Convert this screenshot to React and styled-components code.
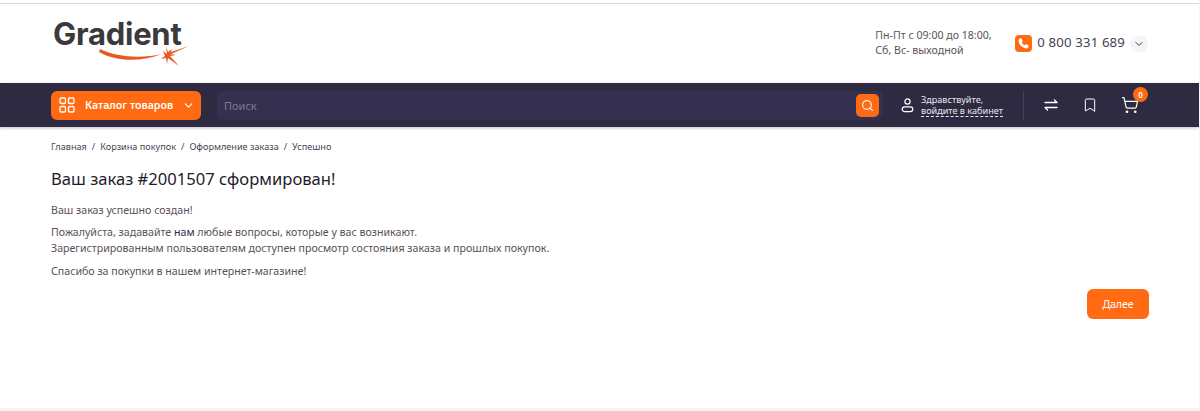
import styled, { createGlobalStyle } from 'styled-components';
import { ChevronDown, Search, Bookmark, ShoppingCart } from 'lucide-react';

const GlobalStyle = createGlobalStyle`
  html, body {
    margin: 0;
    padding: 0;
    background: #fff;
    font-family: 'Noto Sans', 'Open Sans', sans-serif;
    color: #4a4453;
  }
  * {
    box-sizing: border-box;
  }
`;

const Page = styled.div`
  display: flex;
  flex-direction: column;
  height: 411px;
  padding-top: 3px;
  overflow: hidden;
  border-right: 1px solid #f5f5f7;
`;

const TopHeader = styled.header`
  display: flex;
  align-items: center;
  justify-content: space-between;
  height: 80px;
  padding: 0 50px 0 51px;
  border-top: 1px solid #dcdcdc;
`;

const Logo = styled.a`
  display: block;
  position: relative;
  width: 140px;
  height: 58px;
`;

const LogoText = styled.span`
  display: block;
  padding: 1px 0 0 2px;
  font-family: 'Inter', sans-serif;
  font-size: 31px;
  font-weight: 700;
  line-height: 36px;
  letter-spacing: -0.25px;
  color: #3a3a3a;
`;

const LogoSwoosh = styled.svg`
  position: absolute;
  left: 0;
  top: 0;
`;

const Contacts = styled.div`
  display: flex;
  align-items: center;
`;

const Schedule = styled.div`
  width: 140px;
  margin-bottom: 2px;
  font-size: 10.6px;
  line-height: 15px;
  color: #5d5258;
`;

const PhoneIcon = styled.span`
  display: flex;
  align-items: center;
  justify-content: center;
  width: 17px;
  height: 17px;
  border-radius: 4px;
  background: #ff6a13;
`;

const PhoneNumber = styled.span`
  margin: 0 0 3px 5px;
  font-size: 13.2px;
  letter-spacing: 0.15px;
  color: #47424f;
`;

const PhoneToggle = styled.span`
  display: flex;
  align-items: center;
  justify-content: center;
  width: 18px;
  height: 18px;
  margin: 1px 1px 0 5px;
  border-radius: 50%;
  background: #f5f5f7;
  color: #3d3850;
`;

const NavBar = styled.nav`
  display: flex;
  align-items: center;
  height: 44px;
  padding: 0 51px;
  background: #2d2a42;
  box-shadow: 0 1px 3px rgba(0, 0, 0, 0.25);
`;

const CatalogButton = styled.button`
  display: flex;
  align-items: center;
  width: 150px;
  height: 29px;
  padding: 0 6px 0 8px;
  border: none;
  border-radius: 6px;
  background: #ff6a13;
  color: #fff;
  font-family: inherit;
  font-size: 10.6px;
  font-weight: 600;
  white-space: nowrap;
`;

const CatalogLabel = styled.span`
  margin-left: 10px;
  flex: 1;
  text-align: left;
`;

const SearchBox = styled.div`
  display: flex;
  align-items: center;
  justify-content: space-between;
  width: 666px;
  height: 29px;
  margin-left: 16px;
  padding: 0 4px 0 7px;
  border-radius: 6px;
  background: #35304f;
`;

const SearchPlaceholder = styled.span`
  font-size: 11px;
  color: #7f7b8d;
`;

const SearchButton = styled.span`
  display: flex;
  align-items: center;
  justify-content: center;
  width: 23px;
  height: 23px;
  border-radius: 5px;
  background: #ff6a13;
  color: #fff;
`;

const Account = styled.div`
  display: flex;
  align-items: center;
  width: 124px;
  height: 29px;
  margin-left: 17px;
  color: #fff;
  border-right: 1px solid #423e58;
`;

const AccountText = styled.div`
  margin-left: 6px;
  font-size: 9.1px;
  line-height: 11px;
  color: #e8e7ec;
`;

const AccountLink = styled.span`
  display: block;
  border-bottom: 1px dashed #e8e7ec;
  white-space: nowrap;
`;

const NavIcons = styled.div`
  display: flex;
  align-items: center;
  margin-left: 19px;
  gap: 23px;
  color: #fff;
`;

const CartWrap = styled.span`
  position: relative;
  display: flex;
`;

const CartBadge = styled.span`
  position: absolute;
  top: -9px;
  right: -9px;
  display: flex;
  align-items: center;
  justify-content: center;
  width: 15px;
  height: 15px;
  border-radius: 50%;
  background: #ff6a13;
  font-size: 8px;
  font-weight: 600;
  color: #fff;
`;

const Main = styled.main`
  flex: 1;
  display: flex;
  flex-direction: column;
  padding: 13px 50px 0 51px;
`;

const Breadcrumbs = styled.div`
  display: flex;
  gap: 5px;
  font-size: 9.12px;
  line-height: 14px;
  color: #4a4453;
`;

const Title = styled.h1`
  margin: 13px 0 0;
  font-size: 16.6px;
  font-weight: 400;
  line-height: 24px;
  color: #1f1b2b;
`;

const Paragraph = styled.p`
  margin: ${(props) => props.$gap || 7}px 0 0;
  font-size: 10.64px;
  line-height: 16px;
  color: #5a5058;
`;

const Strong = styled.span`
  color: #2d2a42;
`;

const Actions = styled.div`
  display: flex;
  justify-content: flex-end;
  margin-top: 10px;
`;

const NextButton = styled.button`
  width: 62px;
  height: 30px;
  border: none;
  border-radius: 6px;
  background: #ff6a13;
  color: #fff;
  font-family: inherit;
  font-size: 10.5px;
`;

const Footer = styled.div`
  height: 3px;
  background: #f5f5f7;
`;

const CatalogIcon = () => (
  <svg width="16" height="16" viewBox="0 0 16 16" fill="none" stroke="#fff" strokeWidth="1.3">
    <rect x="1" y="1" width="5.5" height="5.5" rx="1.3" />
    <rect x="9.5" y="1" width="5.5" height="5.5" rx="1.3" />
    <rect x="1" y="9.5" width="5.5" height="5.5" rx="1.3" />
    <rect x="9.5" y="9.5" width="5.5" height="5.5" rx="1.3" />
  </svg>
);

const HandsetIcon = () => (
  <svg width="13" height="13" viewBox="0 0 24 24" fill="#fff">
    <path d="M6.6 2.5c.7-.3 1.4 0 1.8.6l2 3.3c.3.6.2 1.3-.2 1.8L8.7 9.8c1.1 2.4 3.1 4.4 5.5 5.5l1.6-1.5c.5-.4 1.2-.5 1.8-.2l3.3 2c.6.4.9 1.1.6 1.8-.8 2.2-2.8 4-5.2 3.6C9.8 19.9 4.1 14.2 3 7.7 2.6 5.3 4.4 3.300 6.600 2.500z" />
  </svg>
);

const UserIcon = () => (
  <svg width="15" height="15" viewBox="0 0 15 15" fill="none" stroke="#fff" strokeWidth="1.2">
    <circle cx="7.5" cy="3.5" r="2.6" />
    <rect x="2.2" y="8.8" width="10.6" height="4.8" rx="2.4" />
  </svg>
);

const CompareIcon = () => (
  <svg width="16" height="16" viewBox="0 0 16 16" fill="none" stroke="#fff" strokeWidth="1.3" strokeLinecap="round" strokeLinejoin="round">
    <path d="M2 5.5h12M11.5 3L14 5.500" />
    <path d="M14 10.500H2M4.500 13L2 10.500" />
  </svg>
);

const App = () => {
  return (
    <>
      <GlobalStyle />
      <Page>
        <TopHeader>
          <Logo>
            <LogoText>Gradient</LogoText>
            <LogoSwoosh width="140" height="58" viewBox="0 0 140 58">
              <path d="M49 34c16 8 41 10 62 5-20 8-46 8-63-2z" fill="#e85a20" />
              <path d="M117 38l21-7-20 9z" fill="#e85a20" />
              <path d="M115 31l2 6 4-3-2 5 6 1-6 1 9 10-11-8-1 6-1-6-5 1 4-3-2-5 4 3z" fill="#e85a20" />
            </LogoSwoosh>
          </Logo>
          <Contacts>
            <Schedule>
              Пн-Пт с 09:00 до 18:00,
              <br />
              Сб, Вс- выходной
            </Schedule>
            <PhoneIcon>
              <HandsetIcon />
            </PhoneIcon>
            <PhoneNumber>0 800 331 689</PhoneNumber>
            <PhoneToggle>
              <ChevronDown size={12} />
            </PhoneToggle>
          </Contacts>
        </TopHeader>
        <NavBar>
          <CatalogButton>
            <CatalogIcon />
            <CatalogLabel>Каталог товаров</CatalogLabel>
            <ChevronDown size={13} />
          </CatalogButton>
          <SearchBox>
            <SearchPlaceholder>Поиск</SearchPlaceholder>
            <SearchButton>
              <Search size={13} />
            </SearchButton>
          </SearchBox>
          <Account>
            <UserIcon />
            <AccountText>
              Здравствуйте,
              <AccountLink>войдите в кабинет</AccountLink>
            </AccountText>
          </Account>
          <NavIcons>
            <CompareIcon />
            <Bookmark size={16} strokeWidth={1.5} />
            <CartWrap>
              <ShoppingCart size={18} strokeWidth={1.6} />
              <CartBadge>0</CartBadge>
            </CartWrap>
          </NavIcons>
        </NavBar>
        <Main>
          <Breadcrumbs>
            <span>Главная</span>
            <span>/</span>
            <span>Корзина покупок</span>
            <span>/</span>
            <span>Оформление заказа</span>
            <span>/</span>
            <span>Успешно</span>
          </Breadcrumbs>
          <Title>Ваш заказ #2001507 сформирован!</Title>
          <Paragraph $gap={11}>Ваш заказ успешно создан!</Paragraph>
          <Paragraph $gap={6}>
            Пожалуйста, задавайте <Strong>нам</Strong> любые вопросы, которые у вас возникают.
            <br />
            Зарегистрированным пользователям доступен просмотр состояния заказа и прошлых покупок.
          </Paragraph>
          <Paragraph>Спасибо за покупки в нашем интернет-магазине!</Paragraph>
          <Actions>
            <NextButton>Далее</NextButton>
          </Actions>
        </Main>
        <Footer />
      </Page>
    </>
  );
};

export default App;
